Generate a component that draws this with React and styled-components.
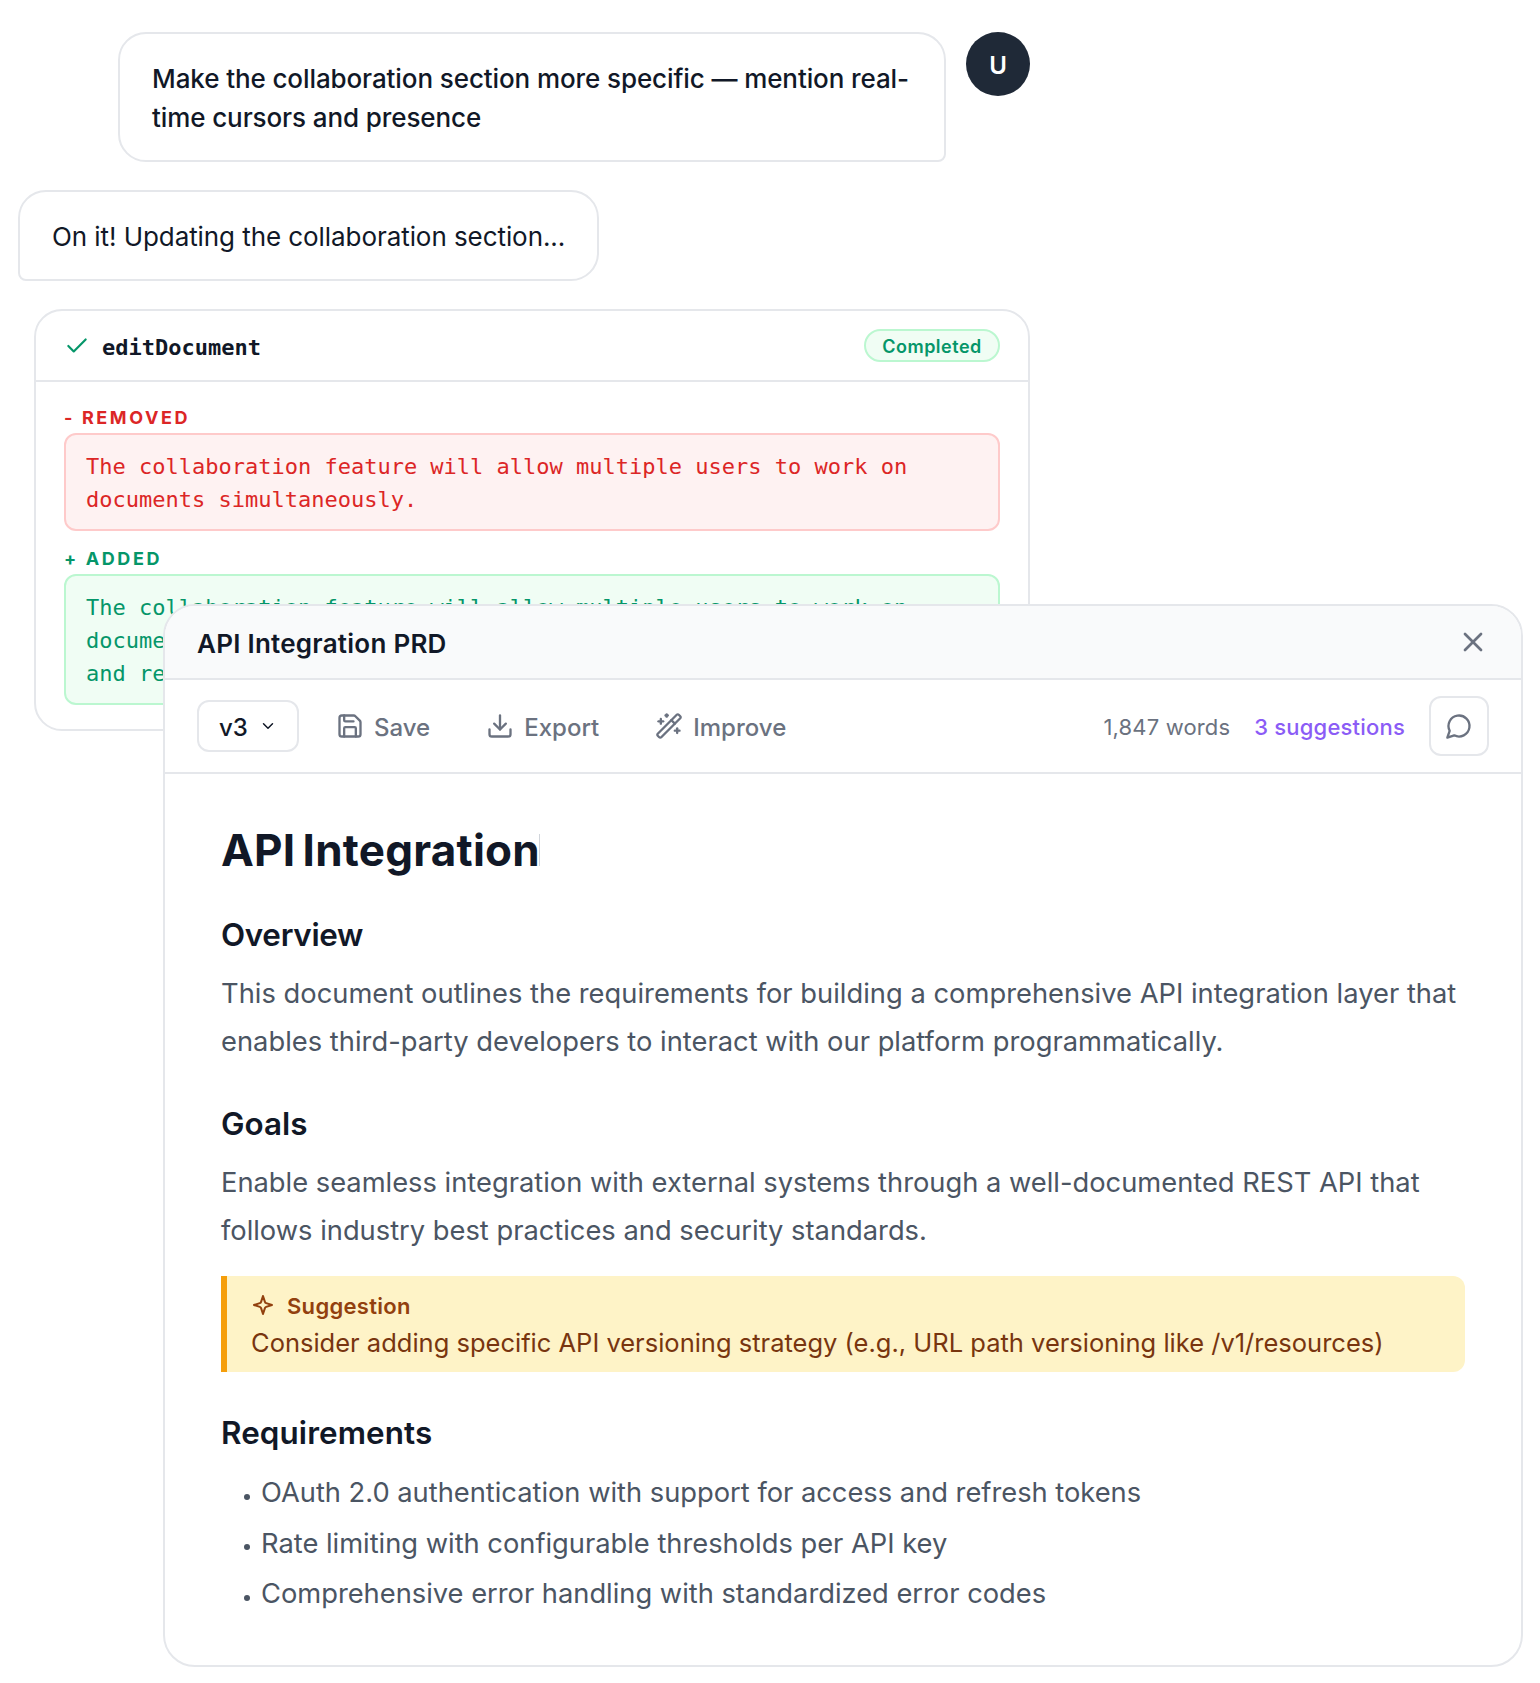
import React from 'react';
import styled, { createGlobalStyle } from 'styled-components';
import { Check, ChevronDown, Download, Save, WandSparkles, X } from 'lucide-react';

const requirements = [
  'OAuth 2.0 authentication with support for access and refresh tokens',
  'Rate limiting with configurable thresholds per API key',
  'Comprehensive error handling with standardized error codes',
];

export default function App() {
  return (
    <>
      <GlobalStyle />
      <Page>
        <Chat>
          <UserRow>
            <Bubble $user>
              Make the collaboration section more specific — mention real-
              <br />
              time cursors and presence
            </Bubble>
            <Avatar>U</Avatar>
          </UserRow>
          <Bubble>On it! Updating the collaboration section...</Bubble>
          <ToolCard>
            <ToolHeader>
              <Check size={26} strokeWidth={2} color="#059669" />
              <ToolName>editDocument</ToolName>
              <Status>Completed</Status>
            </ToolHeader>
            <ToolBody>
              <DiffLabel $tone="removed">- REMOVED</DiffLabel>
              <DiffBox $tone="removed">
                The collaboration feature will allow multiple users to work on
                <br />
                documents simultaneously.
              </DiffBox>
              <DiffLabel $tone="added">+ ADDED</DiffLabel>
              <DiffBox $tone="added">
                The collaboration feature will allow multiple users to work on
                <br />
                documents simultaneously with live cursors, presence indicators,
                <br />
                and real-time updates.
              </DiffBox>
            </ToolBody>
          </ToolCard>
        </Chat>

        <Panel>
          <PanelHeader>
            <PanelTitle>API Integration PRD</PanelTitle>
            <X size={32} strokeWidth={2} />
          </PanelHeader>
          <Toolbar>
            <VersionButton>
              <Label>v3</Label>
              <ChevronDown size={18} strokeWidth={2} />
            </VersionButton>
            <Action>
              <Save size={28} strokeWidth={2} />
              <Label>Save</Label>
            </Action>
            <Action>
              <Download size={28} strokeWidth={2} />
              <Label>Export</Label>
            </Action>
            <Action>
              <WandSparkles size={28} strokeWidth={2} />
              <Label>Improve</Label>
            </Action>
            <Words>1,847 words</Words>
            <Suggestions>3 suggestions</Suggestions>
            <CommentButton>
              <CommentIcon />
            </CommentButton>
          </Toolbar>
          <Document>
            <Title>
              <span>API Integration</span>
              <Caret />
            </Title>
            <Heading $spacing="-0.3px">Overview</Heading>
            <Paragraph $spacing="0.01px">
              This document outlines the requirements for building a comprehensive API integration layer that
              <br />
              enables third-party developers to interact with our platform programmatically.
            </Paragraph>
            <Heading>Goals</Heading>
            <Paragraph $spacing="-0.01px">
              Enable seamless integration with external systems through a well-documented REST API that
              <br />
              follows industry best practices and security standards.
            </Paragraph>
            <Callout>
              <CalloutTitle>
                <SparkleIcon />
                <Label>Suggestion</Label>
              </CalloutTitle>
              <CalloutText>
                Consider adding specific API versioning strategy (e.g., URL path versioning like /v1/resources)
              </CalloutText>
            </Callout>
            <RequirementsHeading $spacing="0.1px">Requirements</RequirementsHeading>
            <List>
              {requirements.map((text) => (
                <Item key={text}>{text}</Item>
              ))}
            </List>
          </Document>
        </Panel>
      </Page>
    </>
  );
}

function CommentIcon() {
  return (
    <LineIcon $size={28} viewBox="0 0 24 24">
      <path d="M7.9 20A9 9 0 1 0 4 16.1L2 22Z" />
    </LineIcon>
  );
}

function SparkleIcon() {
  return (
    <LineIcon $size={24} viewBox="0 0 24 24">
      <path d="m12 3-1.912 5.813a2 2 0 0 1-1.275 1.275L3 12l5.813 1.912a2 2 0 0 1 1.275 1.275L12 21l1.912-5.813a2 2 0 0 1 1.275-1.275L21 12l-5.813-1.912a2 2 0 0 1-1.275-1.275L12 3Z" />
    </LineIcon>
  );
}

const GlobalStyle = createGlobalStyle`
  * {
    box-sizing: border-box;
  }
  body {
    margin: 0;
    background: #ffffff;
    color: #111827;
    font-family: Inter, 'Liberation Sans', sans-serif;
  }
  svg {
    display: block;
    flex-shrink: 0;
  }
`;

const LineIcon = styled.svg`
  width: ${(p) => p.$size}px;
  height: ${(p) => p.$size}px;
  fill: none;
  stroke: currentColor;
  stroke-width: 2;
  stroke-linecap: round;
  stroke-linejoin: round;
`;

const Page = styled.div`
  width: 1540px;
  height: 1683px;
  overflow: hidden;
  padding: 32px 17px 0 18px;
`;

const Chat = styled.div`
  display: flex;
  flex-direction: column;
  align-items: flex-start;
  gap: 28px;
  width: 1012px;
`;

const UserRow = styled.div`
  display: flex;
  align-self: flex-end;
  gap: 20px;
`;

const Bubble = styled.div`
  width: ${(p) => (p.$user ? '828px' : '581px')};
  padding: 25px 32px 23px;
  border: 2px solid #e5e7eb;
  border-radius: ${(p) => (p.$user ? '28px 28px 8px 28px' : '28px 28px 28px 8px')};
  background: #ffffff;
  font-size: 26px;
  font-weight: ${(p) => (p.$user ? 500 : 400)};
  letter-spacing: ${(p) => (p.$user ? '-0.1px' : '-0.07px')};
  line-height: 39px;
  white-space: nowrap;
`;

const Avatar = styled.div`
  display: flex;
  align-items: center;
  justify-content: center;
  width: 64px;
  height: 64px;
  padding-top: 2px;
  border-radius: 50%;
  background: #1f2937;
  color: #ffffff;
  font-size: 24px;
  font-weight: 600;
`;

const ToolCard = styled.div`
  width: 996px;
  margin-left: 16px;
  border: 2px solid #e5e7eb;
  border-radius: 28px;
  background: #ffffff;
`;

const ToolHeader = styled.div`
  display: flex;
  align-items: center;
  gap: 12px;
  height: 71px;
  padding: 0 28px;
  border-bottom: 2px solid #e5e7eb;
`;

const ToolName = styled.span`
  margin-top: 3px;
  font-family: 'DejaVu Sans Mono', monospace;
  font-size: 22px;
  font-weight: 700;
`;

const Status = styled.span`
  margin-left: auto;
  width: 136px;
  height: 33px;
  border: 2px solid #bbf7d0;
  border-radius: 17px;
  background: #f0fdf4;
  color: #059669;
  font-size: 18px;
  font-weight: 600;
  letter-spacing: 0.5px;
  line-height: 31px;
  text-align: center;
`;

const ToolBody = styled.div`
  padding: 25px 28px 24px;
`;

const DiffLabel = styled.div`
  margin-bottom: 4px;
  color: ${(p) => (p.$tone === 'added' ? '#059669' : '#dc2626')};
  font-size: 18px;
  font-weight: 700;
  letter-spacing: 2.6px;
  line-height: 22px;
`;

const DiffBox = styled.div`
  padding: 15px 20px 13px;
  border: 2px solid ${(p) => (p.$tone === 'added' ? '#bbf7d0' : '#fecaca')};
  border-radius: 12px;
  background: ${(p) => (p.$tone === 'added' ? '#f0fdf4' : '#fef2f2')};
  color: ${(p) => (p.$tone === 'added' ? '#059669' : '#dc2626')};
  font-family: 'DejaVu Sans Mono', monospace;
  font-size: 22px;
  line-height: 33px;
  white-space: nowrap;

  & + ${DiffLabel} {
    margin-top: 17px;
  }
`;

const Panel = styled.section`
  position: relative;
  width: 1360px;
  height: 1063px;
  margin: -127px 0 0 145px;
  overflow: hidden;
  border: 2px solid #e5e7eb;
  border-radius: 32px;
  background: #ffffff;
`;

const PanelHeader = styled.header`
  display: flex;
  align-items: center;
  justify-content: space-between;
  height: 74px;
  padding: 0 32px;
  border-bottom: 2px solid #e5e7eb;
  background: #f9fafb;
  color: #6b7280;
`;

const PanelTitle = styled.span`
  padding-top: 2px;
  color: #111827;
  font-size: 26px;
  font-weight: 600;
  letter-spacing: 0.25px;
`;

const Toolbar = styled.div`
  display: flex;
  align-items: center;
  height: 94px;
  padding: 0 32px;
  border-bottom: 2px solid #e5e7eb;
  color: #6b7280;
  font-size: 24px;
`;

const Label = styled.span`
  padding-top: 2px;
`;

const VersionButton = styled.button`
  display: flex;
  align-items: center;
  gap: 11px;
  width: 102px;
  height: 52px;
  margin-right: 13px;
  padding: 0 20px;
  border: 2px solid #e5e7eb;
  border-radius: 12px;
  background: #ffffff;
  color: #111827;
  font: inherit;
  font-weight: 500;
`;

const Action = styled.button`
  display: flex;
  align-items: center;
  gap: 10px;
  margin-right: 8px;
  padding: 0 24px;
  border: 0;
  background: none;
  color: inherit;
  font: inherit;
  font-weight: 500;
`;

const Words = styled.span`
  margin-left: auto;
  padding-top: 2px;
  font-size: 22px;
  letter-spacing: 0.15px;
`;

const Suggestions = styled.span`
  margin: 0 24px;
  padding-top: 2px;
  color: #8b5cf6;
  font-size: 22px;
  font-weight: 500;
  letter-spacing: 0.2px;
`;

const CommentButton = styled.button`
  display: flex;
  align-items: center;
  justify-content: center;
  width: 60px;
  height: 60px;
  padding: 0;
  border: 2px solid #e5e7eb;
  border-radius: 12px;
  background: #ffffff;
  color: #6b7280;
`;

const Document = styled.article`
  padding: 49px 56px;
`;

const Title = styled.h1`
  display: flex;
  align-items: center;
  margin: 0;
  font-size: 44px;
  font-weight: 700;
  letter-spacing: 0.25px;
  line-height: 54px;
  word-spacing: -3.6px;
`;

const Caret = styled.span`
  width: 1px;
  height: 32px;
  margin-left: -1px;
  background: #d1d5db;
`;

const Heading = styled.h2`
  margin: 38px 0 0;
  font-size: 31.4px;
  font-weight: 600;
  letter-spacing: ${(p) => p.$spacing || 0};
  line-height: 40px;
`;

const RequirementsHeading = styled(Heading)`
  margin-top: 41px;
`;

const Paragraph = styled.p`
  margin: 15px 0 0;
  color: #4b5563;
  font-size: 27.32px;
  letter-spacing: ${(p) => p.$spacing};
  line-height: 48px;
  white-space: nowrap;
`;

const Callout = styled.div`
  height: 96px;
  margin-top: 21px;
  padding: 11px 24px;
  border-left: 6px solid #f59e0b;
  border-radius: 0 12px 12px 0;
  background: #fef3c7;
`;

const CalloutTitle = styled.div`
  display: flex;
  align-items: center;
  gap: 12px;
  color: #92400e;
  font-size: 22px;
  font-weight: 600;
  letter-spacing: 0.3px;
  line-height: 34px;
`;

const CalloutText = styled.div`
  color: #78350f;
  font-size: 25.5px;
  line-height: 39px;
  white-space: nowrap;
`;

const List = styled.ul`
  margin: 16px 0 0;
  padding: 0;
  list-style: none;
`;

const Item = styled.li`
  display: flex;
  align-items: center;
  gap: 11px;
  margin-bottom: 3px;
  padding-left: 23px;
  color: #4b5563;
  font-size: 27.3px;
  letter-spacing: -0.01px;
  line-height: 47.6px;
  white-space: nowrap;

  &::before {
    content: '';
    width: 6px;
    height: 6px;
    margin-top: 8px;
    border-radius: 50%;
    background: #4b5563;
  }
`;
